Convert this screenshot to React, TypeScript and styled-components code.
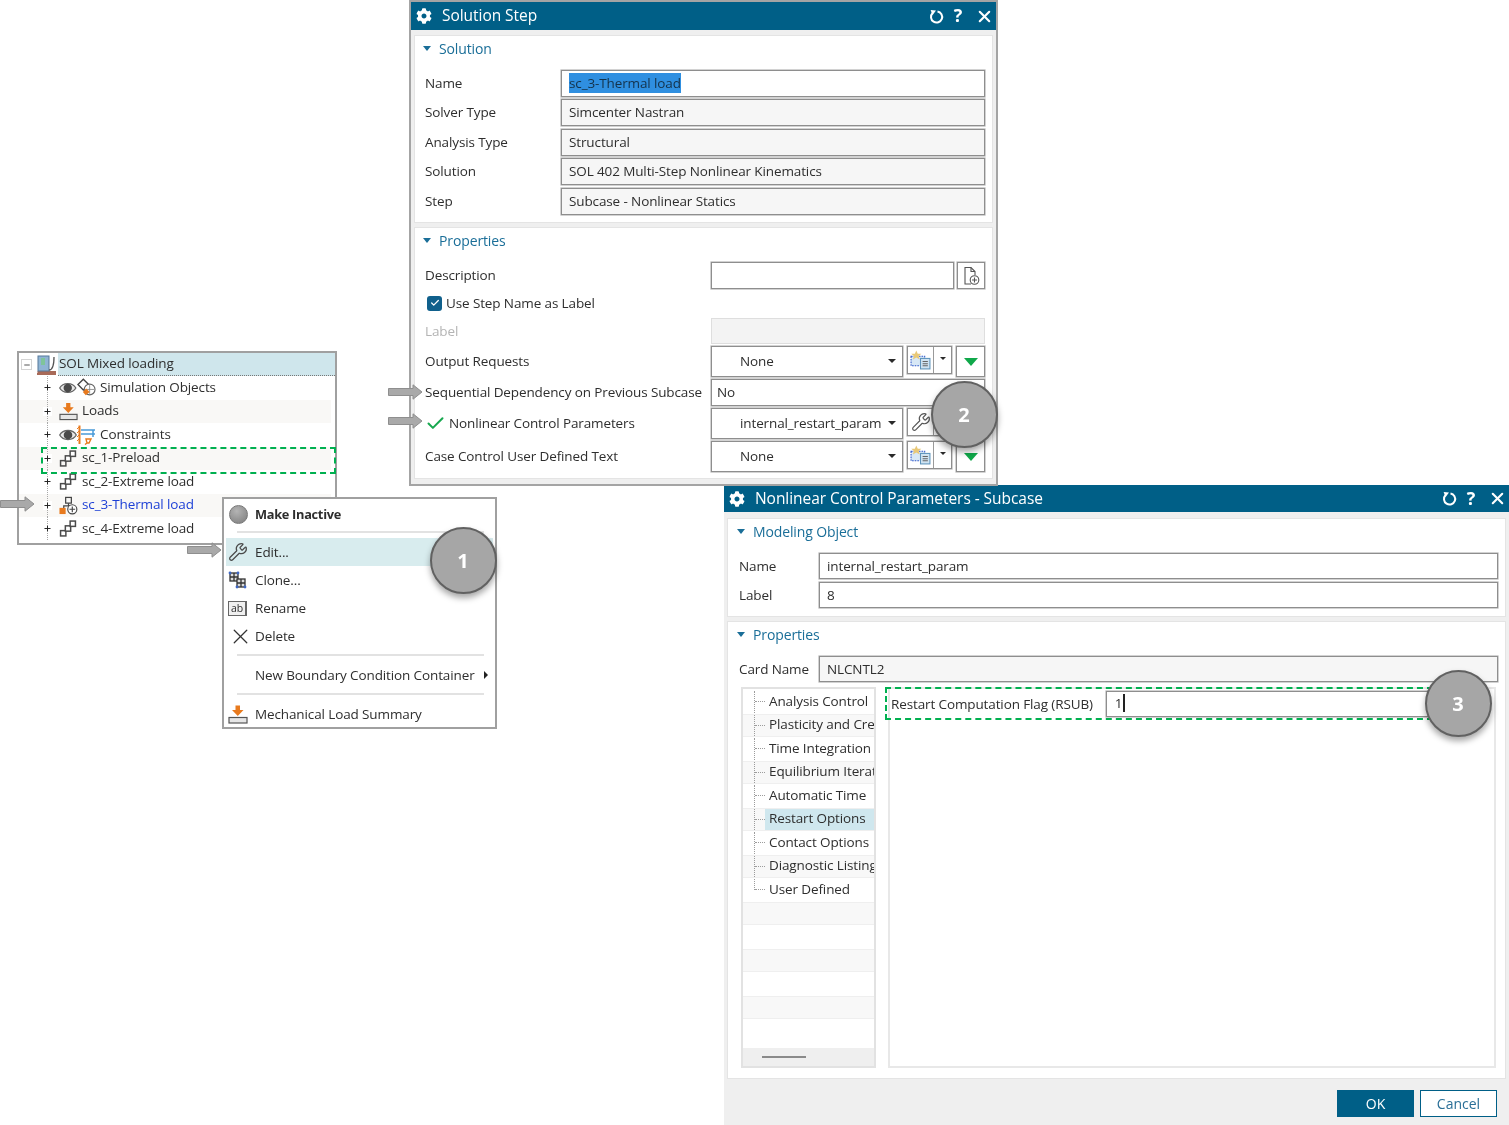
import React from 'react';
import styled, { createGlobalStyle } from 'styled-components';
import { Check, Minus, Plus, Wrench, X } from 'lucide-react';
import { FaCog } from 'react-icons/fa';

const GlobalStyle = createGlobalStyle`
  html, body { margin: 0; padding: 0; background: #fff; }
  body { font-family: "Open Sans", "Liberation Sans", sans-serif; font-size: 13.5px; letter-spacing: -0.12px; color: #2e2e2e; overflow: hidden; }
  * { box-sizing: border-box; }
`;

const BLUE = '#005f87';
const GREEN = '#00b050';

const Desktop = styled.div`
  position: relative;
  width: 1509px;
  height: 1125px;
  overflow: hidden;
  background: #fff;
  filter: blur(0.45px);
`;

/* ---------- dialog windows ---------- */

const Dialog = styled.section<{ $x: number; $y: number; $w: number; $h: number; $edge?: boolean }>`
  position: absolute;
  left: ${p => p.$x}px;
  top: ${p => p.$y}px;
  width: ${p => p.$w}px;
  height: ${p => p.$h}px;
  display: flex;
  flex-direction: column;
  background: #efefef;
  border: ${p => (p.$edge ? '2px solid #a4a4a4' : 'none')};
`;

const TitleBar = styled.header<{ $h: number }>`
  height: ${p => p.$h}px;
  flex: none;
  display: flex;
  align-items: center;
  gap: 10px;
  padding: 0 2px 0 5px;
  background: ${BLUE};
  color: #fff;
  font-size: 15.5px;
  letter-spacing: -0.05px;
`;

const TitleText = styled.span`
  flex: 1;
  padding-bottom: 2px;
`;

const TitleTools = styled.div`
  display: flex;
  align-items: center;
`;

const Help = styled.span`
  font-weight: 700;
  font-size: 18px;
  width: 14px;
  margin: 0 10px 2px 6px;
  text-align: center;
  line-height: 1;
`;

const Panel = styled.div<{ $h?: number; $mt: number; $pl: number; $pr: number }>`
  margin: ${p => p.$mt}px 3px 0 3px;
  ${p => (p.$h ? `height: ${p.$h}px;` : '')}
  flex: none;
  background: #fff;
  border: 1px solid #e4e4e4;
  padding: 0 ${p => p.$pr}px 0 ${p => p.$pl}px;
`;

const PanelHead = styled.div<{ $mb: number }>`
  height: 26px;
  display: flex;
  align-items: center;
  gap: 8px;
  margin-bottom: ${p => p.$mb}px;
  padding-bottom: 2px;
  color: #1a6e98;
  font-size: 14px;
  margin-left: -2px;
`;

const HeadCaret = styled.span`
  width: 0;
  height: 0;
  border-left: 4.5px solid transparent;
  border-right: 4.5px solid transparent;
  border-top: 5px solid #1a6e98;
`;

const Rows = styled.div<{ $gap: number }>`
  display: flex;
  flex-direction: column;
  gap: ${p => p.$gap}px;
`;

const FormRow = styled.div<{ $label: number; $h: number }>`
  display: grid;
  grid-template-columns: ${p => p.$label}px 1fr;
  align-items: center;
  height: ${p => p.$h}px;
`;

const RowLabel = styled.label<{ $muted?: boolean }>`
  color: ${p => (p.$muted ? '#b4b4b4' : '#2e2e2e')};
  white-space: nowrap;
  display: flex;
  align-items: center;
  gap: 3px;
  padding-bottom: 1px;
`;

const Field = styled.div<{ $fill?: string; $soft?: boolean; $pad?: number }>`
  height: 100%;
  display: flex;
  align-items: center;
  padding: 0 0 1px ${p => p.$pad ?? 7}px;
  background: ${p => p.$fill || '#fff'};
  border: 1px solid ${p => (p.$soft ? '#dedede' : '#8e8e8e')};
  box-shadow: ${p => (p.$soft ? 'none' : '0 0 0 0.6px rgba(150, 150, 150, 0.7)')};
  white-space: nowrap;
  overflow: hidden;
`;

const Selected = styled.span`
  background: #2f8fe0;
  color: #14324a;
  padding: 1px 0;
`;

const Cursor = styled.span`
  display: inline-block;
  width: 1.5px;
  height: 18px;
  background: #222;
  margin-left: 1px;
`;

const Controls = styled.div`
  display: flex;
  gap: 4px;
  height: 100%;
`;

const Select = styled.div`
  width: 192px;
  display: flex;
  align-items: center;
  justify-content: space-between;
  padding: 0 6px 2px 28px;
  border: 1px solid #8e8e8e;
  box-shadow: 0 0 0 0.6px rgba(150, 150, 150, 0.7);
`;

const Caret = styled.span<{ $size?: number }>`
  width: 0;
  height: 0;
  border-left: ${p => p.$size || 4}px solid transparent;
  border-right: ${p => p.$size || 4}px solid transparent;
  border-top: ${p => p.$size || 4}px solid #2a2a2a;
`;

const Split = styled.div`
  width: 45px;
  height: 28px;
  display: flex;
  border: 1px solid #8e8e8e;
  box-shadow: 0 0 0 0.6px rgba(150, 150, 150, 0.7);
`;

const SplitIcon = styled.div`
  width: 26px;
  display: flex;
  align-items: center;
  justify-content: center;
  border-right: 1px solid #9a9a9a;
`;

const SplitDrop = styled.div`
  flex: 1;
  display: flex;
  align-items: center;
  justify-content: center;
  padding-bottom: 3px;
`;

const GreenButton = styled.div`
  width: 29px;
  display: flex;
  align-items: center;
  justify-content: center;
  border: 1px solid #8e8e8e;
  box-shadow: 0 0 0 0.6px rgba(150, 150, 150, 0.7);
`;

const GreenDrop = styled.span`
  width: 0;
  height: 0;
  border-left: 7px solid transparent;
  border-right: 7px solid transparent;
  border-top: 8px solid #10a84a;
`;

const DescWrap = styled.div`
  display: flex;
  gap: 3px;
  height: 100%;
`;

const DescField = styled(Field)`
  flex: 1;
`;

const IconButton = styled.div`
  width: 28px;
  display: flex;
  align-items: center;
  justify-content: center;
  border: 1px solid #8e8e8e;
  box-shadow: 0 0 0 0.6px rgba(150, 150, 150, 0.7);
`;

const CheckRow = styled.div`
  height: 25px;
  display: flex;
  align-items: center;
  gap: 4px;
  padding: 0 0 1px 2px;
`;

const CheckBox = styled.span`
  width: 15px;
  height: 15px;
  border-radius: 3px;
  background: #10608c;
  display: flex;
  align-items: center;
  justify-content: center;
  color: #fff;
`;

/* ---------- parameter dialog body ---------- */

const Columns = styled.div`
  display: flex;
  gap: 12px;
  margin: 5px 2px 0 2px;
  height: 381px;
`;

const ParamTree = styled.div`
  width: 135px;
  flex: none;
  display: flex;
  flex-direction: column;
  border: 2px solid #e2e2e2;
  padding-top: 1px;
`;

const ParamRow = styled.div<{ $odd: boolean }>`
  height: 23.5px;
  flex: none;
  display: flex;
  align-items: stretch;
  padding-left: 11px;
  white-space: nowrap;
  overflow: hidden;
  background: ${p => (p.$odd ? '#f8f8f8' : '#fff')};
  border-top: 1px solid ${p => (p.$odd ? '#efefef' : 'transparent')};
  border-bottom: 1px solid ${p => (p.$odd ? '#efefef' : 'transparent')};
`;

const Connector = styled.span<{ $end?: boolean }>`
  width: 11px;
  flex: none;
  height: ${p => (p.$end ? '50%' : '100%')};
  display: flex;
  align-items: ${p => (p.$end ? 'flex-end' : 'center')};
  border-left: 1px dotted #9c9c9c;
  &::before {
    content: '';
    width: 100%;
    border-top: 1px dotted #9c9c9c;
  }
`;

const ParamText = styled.span<{ $active?: boolean }>`
  flex: 1;
  display: flex;
  align-items: center;
  padding: 0 0 2px 4px;
  background: ${p => (p.$active ? '#cfe7ee' : 'transparent')};
`;

const ParamScroll = styled.div`
  margin-top: auto;
  height: 18px;
  background: #efefef;
  display: flex;
  align-items: center;
  padding-left: 19px;
`;

const ScrollThumb = styled.span`
  width: 44px;
  height: 2px;
  background: #8a8a8a;
`;

const ParamBody = styled.div`
  flex: 1;
  border: 2px solid #e8e8e8;
  background: #fff;
`;

const FlagRow = styled.div`
  display: flex;
  align-items: center;
  height: 32px;
  padding: 0 40px 3px 1px;
  gap: 13px;
`;

const FlagField = styled(Field)`
  flex: 1;
  height: 26px;
  padding-left: 8px;
`;

const Footer = styled.footer`
  flex: 1;
  display: flex;
  align-items: flex-start;
  justify-content: flex-end;
  gap: 6px;
  padding: 11px 12px 0 0;
`;

const Button = styled.button<{ $primary?: boolean }>`
  width: 77px;
  height: 27px;
  font: inherit;
  font-size: 14px;
  color: ${p => (p.$primary ? '#fff' : '#2a6f97')};
  background: ${p => (p.$primary ? BLUE : '#fff')};
  border: 1px solid ${BLUE};
  padding: 0;
`;

/* ---------- simulation tree ---------- */

const SimTree = styled.div`
  position: absolute;
  left: 17px;
  top: 351px;
  width: 320px;
  height: 194px;
  background: #fff;
  border: 2px solid #a0a0a0;
  display: flex;
  flex-direction: column;
`;

const RootRow = styled.div`
  height: 23px;
  flex: none;
  display: flex;
  align-items: center;
  padding-left: 2px;
`;

const RootBox = styled.span`
  width: 11px;
  height: 11px;
  flex: none;
  border: 1px solid #d4d4d4;
  display: flex;
  align-items: center;
  justify-content: center;
  color: #333;
  margin-right: 4px;
`;

const RootLabel = styled.span`
  flex: 1;
  height: 100%;
  display: flex;
  align-items: center;
  padding: 0 0 2px 1px;
  margin-left: 1px;
  background: #cfe6ec;
  border-bottom: 1px dotted #777;
`;

const SimRow = styled.div<{ $odd: boolean }>`
  height: 23.5px;
  flex: none;
  display: flex;
  align-items: center;
  padding-left: 24px;
  background-color: ${p => (p.$odd ? '#f9f8f6' : '#fff')};
  background-image: repeating-linear-gradient(#a8a8a8 0 1px, transparent 1px 2px);
  background-size: 1px 100%;
  background-position: 28px 0;
  background-repeat: no-repeat;
  border-right: 4px solid #fff;
`;

const Expander = styled.span`
  width: 9px;
  height: 9px;
  flex: none;
  display: flex;
  align-items: center;
  justify-content: center;
  background: #fff;
  color: #222;
`;

const IconSlot = styled.span<{ $w: number }>`
  width: ${p => p.$w}px;
  flex: none;
  margin: 0 4px 0 7px;
  display: flex;
  align-items: center;
`;

const SimText = styled.span<{ $link?: boolean }>`
  color: ${p => (p.$link ? '#1c3fd6' : '#2e2e2e')};
  padding-bottom: 2px;
`;

/* ---------- context menu ---------- */

const Menu = styled.div`
  position: absolute;
  left: 222px;
  top: 497px;
  width: 275px;
  height: 232px;
  padding: 1px 2px 0 2px;
  background: #fff;
  border: 2px solid #a0a0a0;
  display: flex;
  flex-direction: column;
`;

const MenuItem = styled.div<{ $h: number; $active?: boolean }>`
  height: ${p => p.$h}px;
  flex: none;
  display: flex;
  align-items: center;
  padding-left: 2px;
  background: ${p => (p.$active ? '#d8ecee' : 'transparent')};
`;

const MenuIcon = styled.span`
  width: 27px;
  flex: none;
  display: flex;
  align-items: center;
`;

const MenuText = styled.span<{ $bold?: boolean }>`
  flex: 1;
  white-space: nowrap;
  font-weight: ${p => (p.$bold ? 700 : 400)};
  ${p => (p.$bold ? 'font-size: 12.8px; letter-spacing: -0.3px; padding-bottom: 3px;' : '')}
`;

const MenuArrow = styled.span`
  width: 0;
  height: 0;
  border-top: 4px solid transparent;
  border-bottom: 4px solid transparent;
  border-left: 4px solid #222;
  margin-right: 5px;
`;

const MenuRule = styled.div<{ $mt: number; $mb: number }>`
  height: 2px;
  flex: none;
  margin: ${p => p.$mt}px 9px ${p => p.$mb}px 11px;
  background: #e2e2e2;
`;

const Disc = styled.span`
  width: 19px;
  height: 19px;
  margin: 0 0 2px 1px;
  border-radius: 50%;
  background: radial-gradient(circle at 40% 30%, #b4b4b4, #7c7c7c);
  border: 1px solid #777;
`;

/* ---------- annotations on top ---------- */

const Bubble = styled.div<{ $cx: number; $cy: number }>`
  position: absolute;
  left: ${p => p.$cx - 33.5}px;
  top: ${p => p.$cy - 33.5}px;
  width: 67px;
  height: 67px;
  border-radius: 50%;
  display: flex;
  align-items: center;
  justify-content: center;
  background: #a6a6a6;
  border: 2px solid #616161;
  box-shadow: 0 4px 6px rgba(0, 0, 0, 0.35);
  color: #fff;
  font-weight: 700;
  font-size: 20px;
`;

const Dashed = styled.div<{ $x: number; $y: number; $w: number; $h: number }>`
  position: absolute;
  left: ${p => p.$x}px;
  top: ${p => p.$y}px;
  width: ${p => p.$w}px;
  height: ${p => p.$h}px;
  border: 2px dashed ${GREEN};
`;

const Pointer = styled.svg<{ $x: number; $y: number }>`
  position: absolute;
  left: ${p => p.$x}px;
  top: ${p => p.$y}px;
`;

/* ---------- drawn icons ---------- */

const Undo = () => (
  <svg width="17" height="17" viewBox="0 0 17 17" fill="none">
    <path d="M4.6 5 A5.6 5.6 0 1 0 9.5 3.4" stroke="#fff" strokeWidth="2" />
    <path d="M2.6 2 L8 2.6 L4.6 7 Z" fill="#fff" />
  </svg>
);

const Eye = () => (
  <svg width="18" height="14" viewBox="0 0 18 14">
    <path d="M0.7 7 C4 1 14 1 17.3 7 C14 13 4 13 0.7 7 Z" fill="#e8e8e8" stroke="#666" strokeWidth="1.3" />
    <circle cx="9" cy="7" r="4.3" fill="#4a4a4a" />
  </svg>
);

const SimObjects = () => (
  <svg width="20" height="19" viewBox="0 0 20 19" fill="none">
    <path d="M6.5 1 L12 6.5 L6.5 12 L1 6.5 Z" stroke="#444" strokeWidth="1.4" fill="#fff" />
    <circle cx="13" cy="11.5" r="5.5" stroke="#666" strokeWidth="1.2" fill="#fff" />
    <path d="M13 7 V16 M8.5 11.5 H17.5" stroke="#888" strokeWidth="0.9" />
    <path d="M9.5 10.5 L13 14 L9 17.5 L6 14 Z" fill="#e87a1e" />
  </svg>
);

const LoadIcon = () => (
  <svg width="20" height="19" viewBox="0 0 20 19">
    <path d="M7.5 0.5 H12 V5 H15.5 L9.8 11 L4 5 H7.5 Z" fill="#e87a1e" />
    <rect x="1" y="12.5" width="18" height="5.5" fill="#e6e6e6" stroke="#555" strokeWidth="1.2" />
  </svg>
);

const ConstraintIcon = () => (
  <svg width="19" height="20" viewBox="0 0 19 20" fill="none">
    <path d="M2.5 0.5 V19" stroke="#e87a1e" strokeWidth="2" />
    <path d="M0 4 L2.5 1.5 M0 8 L2.5 5.5 M0 12 L2.5 9.5 M0 16 L2.5 13.5" stroke="#e87a1e" />
    <path d="M4 5 H18 M4 9 H18 M16 5 V12" stroke="#4a9bd8" strokeWidth="1.5" />
    <path d="M9 14 H14 L12 18 H10 Z M10 18 L8 19.5" stroke="#e87a1e" strokeWidth="1.4" />
  </svg>
);

const RootBook = () => (
  <svg width="21" height="20" viewBox="0 0 21 20" fill="none">
    <path d="M1.5 17 H20 M1 19 H20" stroke="#8c3a22" strokeWidth="1.4" />
    <rect x="2" y="1" width="11" height="15" fill="#8fb4d4" stroke="#56789a" />
    <rect x="5" y="3" width="4" height="7" fill="#7fc49a" />
    <path d="M13 15 C17 15 18 10 18 2" stroke="#555" strokeWidth="1.3" />
  </svg>
);

const StepIcon = () => (
  <svg width="18" height="17" viewBox="0 0 16 16" fill="none" stroke="#4a4a4a" strokeWidth="1.4">
    <rect x="1" y="10" width="5" height="5" />
    <rect x="5.5" y="5.5" width="5" height="5" fill="#fff" />
    <rect x="10" y="1" width="5" height="5" fill="#fff" />
  </svg>
);

const ActiveStepIcon = () => (
  <svg width="20" height="19" viewBox="0 0 20 19" fill="none">
    <rect x="7" y="1" width="6" height="6" stroke="#444" strokeWidth="1.3" />
    <path d="M10 7 V10 H5 V12 M10 10 H13" stroke="#444" strokeWidth="1.3" />
    <rect x="0.5" y="12" width="6.5" height="6.5" fill="#e87a1e" />
    <circle cx="14" cy="13.5" r="4.8" stroke="#444" strokeWidth="1.2" fill="#fff" />
    <path d="M14 10.5 V16.5 M11 13.5 H17" stroke="#444" strokeWidth="1.2" />
  </svg>
);

const CloneIcon = () => (
  <svg width="19" height="18" viewBox="0 0 19 18" fill="none" stroke="#333" strokeWidth="1.3">
    <rect x="2" y="2" width="8" height="8" fill="#ddd" />
    <path d="M6 2 V10 M2 6 H10" />
    <rect x="9" y="8" width="8" height="8" fill="#ddd" />
    <path d="M13 8 V16 M9 12 H17" />
    <circle cx="2" cy="2" r="1.4" fill="#3d66c4" stroke="none" />
    <circle cx="10" cy="2" r="1.4" fill="#3d66c4" stroke="none" />
    <circle cx="17" cy="16" r="1.4" fill="#3d66c4" stroke="none" />
    <circle cx="9" cy="16" r="1.4" fill="#3d66c4" stroke="none" />
  </svg>
);

const RenameBox = styled.span`
  width: 19px;
  height: 15px;
  display: flex;
  align-items: center;
  justify-content: center;
  font-size: 10.5px;
  line-height: 1;
  background: #f0f0f0;
  border: 1px solid #666;
  border-right-width: 2px;
`;

const RenameIcon = () => <RenameBox>ab</RenameBox>;

const OutputIcon = () => (
  <svg width="21" height="20" viewBox="0 0 20 19" fill="none">
    <rect x="1" y="6" width="13" height="9" stroke="#2c55c8" strokeDasharray="1.5 1" fill="#d8e8f6" />
    <path d="M6 0.5 L7.4 3.6 L10.8 3.6 L8.3 5.8 L9.2 9 L6 7.2 L2.8 9 L3.7 5.8 L1.2 3.6 L4.6 3.6 Z" fill="#e8c878" />
    <rect x="10" y="8" width="9" height="10" fill="#cfe3f2" stroke="#5d93bb" />
    <path d="M12 11 H17 M12 13 H17 M12 15 H17" stroke="#666" />
  </svg>
);

const DocAdd = () => (
  <svg width="18" height="20" viewBox="0 0 18 20" fill="none" stroke="#555" strokeWidth="1.1">
    <path d="M9 18 H3 V1.5 H9 L13 5.5 V9" />
    <path d="M9 1.5 V5.5 H13" />
    <circle cx="12.5" cy="14" r="4.3" fill="#fff" />
    <path d="M12.5 11.5 V16.5 M10 14 H15" />
  </svg>
);

const BlockArrow = ({ x, y }: { x: number; y: number }) => (
  <Pointer $x={x} $y={y} width="35" height="16" viewBox="0 0 35 16">
    <path d="M0.5 4.5 H25 V0.8 L34 8 L25 15.2 V11.5 H0.5 Z" fill="#a9a9a9" stroke="#8e8e8e" />
  </Pointer>
);

const simRows = [
  { id: 'objects', text: 'Simulation Objects', w: 37, icon: <><Eye /><SimObjects /></> },
  { id: 'loads', text: 'Loads', w: 19, icon: <LoadIcon /> },
  { id: 'constraints', text: 'Constraints', w: 37, icon: <><Eye /><ConstraintIcon /></> },
  { id: 'sc1', text: 'sc_1-Preload', w: 19, icon: <StepIcon /> },
  { id: 'sc2', text: 'sc_2-Extreme load', w: 19, icon: <StepIcon /> },
  { id: 'sc3', text: 'sc_3-Thermal load', w: 19, icon: <ActiveStepIcon />, link: true },
  { id: 'sc4', text: 'sc_4-Extreme load', w: 19, icon: <StepIcon /> },
];

const paramRows = [
  'Analysis Control',
  'Plasticity and Creep',
  'Time Integration',
  'Equilibrium Iteration',
  'Automatic Time',
  'Restart Options',
  'Contact Options',
  'Diagnostic Listing',
  'User Defined',
  '',
  '',
  '',
  '',
  '',
  '',
];

const solutionRows = [
  ['Solver Type', 'Simcenter Nastran'],
  ['Analysis Type', 'Structural'],
  ['Solution', 'SOL 402 Multi-Step Nonlinear Kinematics'],
  ['Step', 'Subcase - Nonlinear Statics'],
];

const Tools = () => (
  <TitleTools>
    <Undo />
    <Help>?</Help>
    <X size={19} strokeWidth={2.6} />
  </TitleTools>
);

const SelectGroup = ({ value }: { value: string }) => (
  <Controls>
    <Select>
      {value}
      <Caret />
    </Select>
    <Split>
      <SplitIcon><OutputIcon /></SplitIcon>
      <SplitDrop><Caret $size={3} /></SplitDrop>
    </Split>
    <GreenButton><GreenDrop /></GreenButton>
  </Controls>
);

const SolutionDialog = () => (
  <Dialog $x={409} $y={0} $w={589} $h={486} $edge>
    <TitleBar $h={28}>
      <FaCog size={16} />
      <TitleText>Solution Step</TitleText>
      <Tools />
    </TitleBar>
    <Panel $mt={5} $h={188} $pl={10} $pr={7}>
      <PanelHead $mb={8}><HeadCaret />Solution</PanelHead>
      <Rows $gap={2.4}>
        <FormRow $label={136} $h={27}>
          <RowLabel>Name</RowLabel>
          <Field><Selected>sc_3-Thermal load</Selected></Field>
        </FormRow>
        {solutionRows.map(([label, value]) => (
          <FormRow key={label} $label={136} $h={27}>
            <RowLabel>{label}</RowLabel>
            <Field $fill="#f6f6f6">{value}</Field>
          </FormRow>
        ))}
      </Rows>
    </Panel>
    <Panel $mt={4} $h={252} $pl={10} $pr={7}>
      <PanelHead $mb={8}><HeadCaret />Properties</PanelHead>
      <Rows $gap={2}>
        <FormRow $label={286} $h={27}>
          <RowLabel>Description</RowLabel>
          <DescWrap>
            <DescField />
            <IconButton><DocAdd /></IconButton>
          </DescWrap>
        </FormRow>
        <CheckRow>
          <CheckBox><Check size={10} strokeWidth={3} /></CheckBox>
          Use Step Name as Label
        </CheckRow>
        <FormRow $label={286} $h={26}>
          <RowLabel $muted>Label</RowLabel>
          <Field $fill="#f3f3f3" $soft />
        </FormRow>
        <FormRow $label={286} $h={31}>
          <RowLabel>Output Requests</RowLabel>
          <SelectGroup value="None" />
        </FormRow>
        <FormRow $label={286} $h={27}>
          <RowLabel>Sequential Dependency on Previous Subcase</RowLabel>
          <Field $pad={5}>No</Field>
        </FormRow>
        <FormRow $label={286} $h={31}>
          <RowLabel>
            <Check size={21} strokeWidth={2.3} color="#17a84f" />
            Nonlinear Control Parameters
          </RowLabel>
          <Controls>
            <Select>
              internal_restart_param
              <Caret />
            </Select>
            <Split>
              <SplitIcon><Wrench size={20} strokeWidth={1.4} color="#555" /></SplitIcon>
            </Split>
          </Controls>
        </FormRow>
        <FormRow $label={286} $h={31}>
          <RowLabel>Case Control User Defined Text</RowLabel>
          <SelectGroup value="None" />
        </FormRow>
      </Rows>
    </Panel>
  </Dialog>
);

const ParametersDialog = () => (
  <Dialog $x={724} $y={485} $w={785} $h={640}>
    <TitleBar $h={27}>
      <FaCog size={16} />
      <TitleText>Nonlinear Control Parameters - Subcase</TitleText>
      <Tools />
    </TitleBar>
    <Panel $mt={6} $h={99} $pl={11} $pr={7}>
      <PanelHead $mb={8}><HeadCaret />Modeling Object</PanelHead>
      <Rows $gap={3}>
        <FormRow $label={80} $h={26}>
          <RowLabel>Name</RowLabel>
          <Field>internal_restart_param</Field>
        </FormRow>
        <FormRow $label={80} $h={26}>
          <RowLabel>Label</RowLabel>
          <Field>8</Field>
        </FormRow>
      </Rows>
    </Panel>
    <Panel $mt={4} $h={458} $pl={11} $pr={7}>
      <PanelHead $mb={8}><HeadCaret />Properties</PanelHead>
      <FormRow $label={80} $h={26}>
        <RowLabel>Card Name</RowLabel>
        <Field $fill="#f6f6f6">NLCNTL2</Field>
      </FormRow>
      <Columns>
        <ParamTree>
          {paramRows.map((text, i) => (
            <ParamRow key={i} $odd={i % 2 === 1}>
              {text && <Connector $end={i === 8} />}
              {text && <ParamText $active={text === 'Restart Options'}>{text}</ParamText>}
            </ParamRow>
          ))}
          <ParamScroll><ScrollThumb /></ParamScroll>
        </ParamTree>
        <ParamBody>
          <FlagRow>
            Restart Computation Flag (RSUB)
            <FlagField>1<Cursor /></FlagField>
          </FlagRow>
        </ParamBody>
      </Columns>
    </Panel>
    <Footer>
      <Button $primary>OK</Button>
      <Button>Cancel</Button>
    </Footer>
  </Dialog>
);

const TreePanel = () => (
  <SimTree>
    <RootRow>
      <RootBox><Minus size={8} strokeWidth={2.5} /></RootBox>
      <RootBook />
      <RootLabel>SOL Mixed loading</RootLabel>
    </RootRow>
    {simRows.map((row, i) => (
      <SimRow key={row.id} $odd={i % 2 === 1}>
        <Expander><Plus size={9} strokeWidth={2.6} /></Expander>
        <IconSlot $w={row.w}>{row.icon}</IconSlot>
        <SimText $link={row.link}>{row.text}</SimText>
      </SimRow>
    ))}
  </SimTree>
);

const ContextMenu = () => (
  <Menu>
    <MenuItem $h={31}>
      <MenuIcon><Disc /></MenuIcon>
      <MenuText $bold>Make Inactive</MenuText>
    </MenuItem>
    <MenuRule $mt={0} $mb={5} />
    <MenuItem $h={28} $active>
      <MenuIcon><Wrench size={20} strokeWidth={1.5} color="#4a4a4a" /></MenuIcon>
      <MenuText>Edit...</MenuText>
    </MenuItem>
    <MenuItem $h={28}>
      <MenuIcon><CloneIcon /></MenuIcon>
      <MenuText>Clone...</MenuText>
    </MenuItem>
    <MenuItem $h={28}>
      <MenuIcon><RenameIcon /></MenuIcon>
      <MenuText>Rename</MenuText>
    </MenuItem>
    <MenuItem $h={28}>
      <MenuIcon><X size={25} strokeWidth={1.2} color="#333" /></MenuIcon>
      <MenuText>Delete</MenuText>
    </MenuItem>
    <MenuRule $mt={4} $mb={5} />
    <MenuItem $h={28}>
      <MenuIcon />
      <MenuText>New Boundary Condition Container</MenuText>
      <MenuArrow />
    </MenuItem>
    <MenuRule $mt={4} $mb={5} />
    <MenuItem $h={28}>
      <MenuIcon><LoadIcon /></MenuIcon>
      <MenuText>Mechanical Load Summary</MenuText>
    </MenuItem>
  </Menu>
);

const App = () => (
  <Desktop>
    <GlobalStyle />
    <TreePanel />
    <ContextMenu />
    <ParametersDialog />
    <SolutionDialog />
    <Dashed $x={41} $y={447} $w={295} $h={27} />
    <Dashed $x={885} $y={687} $w={548} $h={33} />
    <BlockArrow x={0} y={496} />
    <BlockArrow x={187} y={542} />
    <BlockArrow x={388} y={384} />
    <BlockArrow x={388} y={413} />
    <Bubble $cx={463} $cy={560}>1</Bubble>
    <Bubble $cx={964} $cy={414}>2</Bubble>
    <Bubble $cx={1458} $cy={703}>3</Bubble>
  </Desktop>
);

export default App;
